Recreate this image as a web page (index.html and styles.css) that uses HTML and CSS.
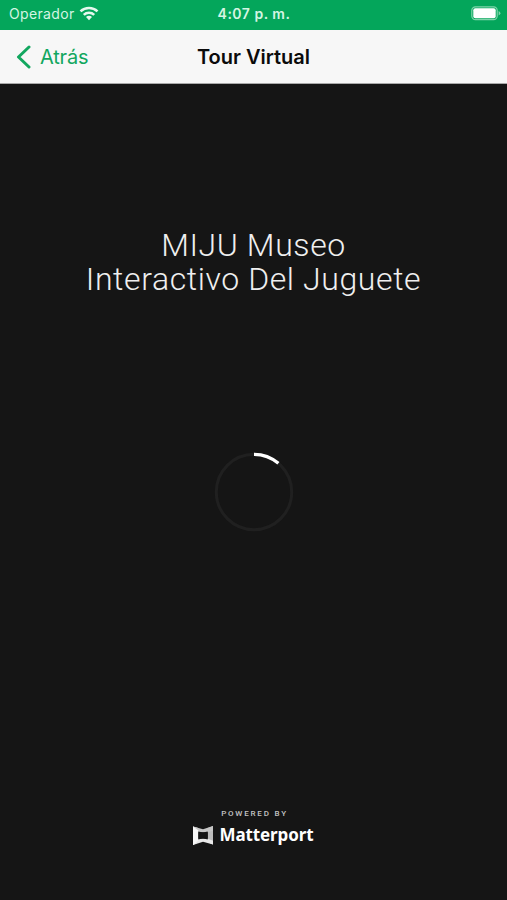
FILE: index.html
```
<!DOCTYPE html>
<html lang="es">

<head>
    <meta charset="UTF-8" />
    <meta name="viewport" content="width=device-width, initial-scale=1.0" />
    <title>Tour Virtual</title>
    <link rel="stylesheet" href="styles.css">
</head>

<body>

<header>
    <div class="status">
        <div class="status__carrier">
            <span>Operador</span>
            <svg width="20" height="15" viewBox="0 0 20 15" fill="none" stroke="#e6f8ee" stroke-width="2.6">
                <path d="M1.5 5.4a12.4 12.4 0 0 1 17 0" />
                <path d="M4.8 8.9a7.5 7.5 0 0 1 10.4 0" />
                <path d="M10 14.3l-3-3.2a4.2 4.2 0 0 1 6 0z" fill="#e6f8ee" stroke="none" />
            </svg>
        </div>
        <div class="status__time">4:07 p. m.</div>
        <svg class="status__battery" width="30" height="15" viewBox="0 0 30 15">
            <rect x=".8" y=".8" width="25.4" height="12.9" rx="3.6" fill="none" stroke="#7fd4aa" stroke-width="1.2" />
            <rect x="2.3" y="2.3" width="22.4" height="9.9" rx="2" fill="#fff" />
            <path d="M27.6 5v4.6q1.8-.8 1.8-2.3T27.6 5z" fill="#7fd4aa" />
        </svg>
    </div>
    <nav class="navbar">
        <a class="navbar__back" href="#">
            <svg width="15" height="24" viewBox="0 0 15 24" fill="none" stroke="#12a75f" stroke-width="3" stroke-linecap="round" stroke-linejoin="round">
                <path d="M13 2L2.5 12 13 22" />
            </svg>
            <span>Atrás</span>
        </a>
        <h1 class="navbar__title">Tour Virtual</h1>
    </nav>
</header>

<main class="tour">
    <h2 class="tour__name">MIJU Museo<br>Interactivo Del Juguete</h2>
    <svg class="tour__loader" width="80" height="80" viewBox="0 0 80 80" fill="none">
        <circle cx="40" cy="40" r="37.7" stroke="#202020" stroke-width="3" />
        <path d="M40 2.3a37.7 37.7 0 0 1 24.4 9" stroke="#fff" stroke-width="3.3" />
    </svg>
    <footer class="powered">
        <div class="powered__label">POWERED BY</div>
        <div class="powered__brand">
            <svg width="20" height="21" viewBox="0 0 21 21">
                <path d="M0 1l5.5 1.5v15L0 20.5z" fill="#f4f4f4" />
                <path d="M21 .5l-5.5 2v15l5.5 2.5z" fill="#bcbcbc" />
                <path d="M0 1l10.5 3L21 .5v5L15 7.2H5.5L0 5z" fill="#c6c6c6" />
                <path d="M0 20.5L10.5 17 21 20v-4l-5.5-2h-10L0 16z" fill="#e9e9e9" />
                <path d="M0 1l5.5 4v11L0 20.5z" fill="#f7f7f7" />
                <path d="M5.6 6.2l4.9 1.1 4.9-1.1v8.5l-4.9-1.2-4.9 1.2z" fill="#151515" />
            </svg>
            <span>Matterport</span>
        </div>
    </footer>
</main>

</body>
</html>
```
FILE: styles.css
```
*,
*::before,
*::after {
    box-sizing: border-box;
}

body,
h1,
h2 {
    margin: 0;
    padding: 0;
}

body {
    font-family: Inter, sans-serif;
    background: #151515;
    height: 100vh;
    display: flex;
    flex-direction: column;
}

.status {
    height: 30px;
    padding: 0 6px 3px 9px;
    background: #04a65b;
    color: #d5f5e3;
    display: grid;
    grid-template-columns: 1fr auto 1fr;
    align-items: center;
}
.status__carrier {
    display: flex;
    align-items: center;
    gap: 4px;
    font-size: 14px;
    letter-spacing: 0.35px;
}
.status__time {
    margin-right: 2px;
    font-size: 14px;
    font-weight: 600;
    letter-spacing: 0.5px;
}
.status__battery {
    justify-self: end;
}

.navbar {
    height: 54px;
    padding: 0 16px;
    background: #f7f7f7;
    border-bottom: 1px solid #a9a9a9;
    display: grid;
    grid-template-columns: 1fr auto 1fr;
    align-items: center;
}
.navbar__back {
    display: flex;
    align-items: center;
    gap: 9px;
    color: #12a75f;
    font-size: 20px;
    letter-spacing: -0.2px;
    text-decoration: none;
}
.navbar__title {
    font-size: 20px;
    font-weight: 600;
    line-height: 24px;
    color: #0b0b0b;
}

.tour {
    flex: 1;
    display: flex;
    flex-direction: column;
    align-items: center;
}
.tour__name {
    margin-top: 144px;
    font-family: Roboto, sans-serif;
    font-size: 32px;
    font-weight: 300;
    line-height: 34px;
    letter-spacing: 0.6px;
    text-align: center;
    color: #efefef;
}
.tour__loader {
    margin-top: 156px;
}

.powered {
    margin-top: auto;
    margin-bottom: 54px;
    display: flex;
    flex-direction: column;
    align-items: center;
}
.powered__label {
    padding-left: 2px;
    font-family: Roboto, sans-serif;
    font-size: 8px;
    font-weight: 500;
    line-height: 10px;
    letter-spacing: 1.8px;
    color: #c4c4c4;
}
.powered__brand {
    margin-top: 6px;
    height: 21px;
    display: flex;
    align-items: center;
    gap: 6px;
    font-family: "Noto Sans", sans-serif;
    font-size: 17px;
    font-weight: 700;
    letter-spacing: -0.1px;
    line-height: 20px;
    color: #fff;
}
.powered__brand span {
    padding-bottom: 1px;
}
```
